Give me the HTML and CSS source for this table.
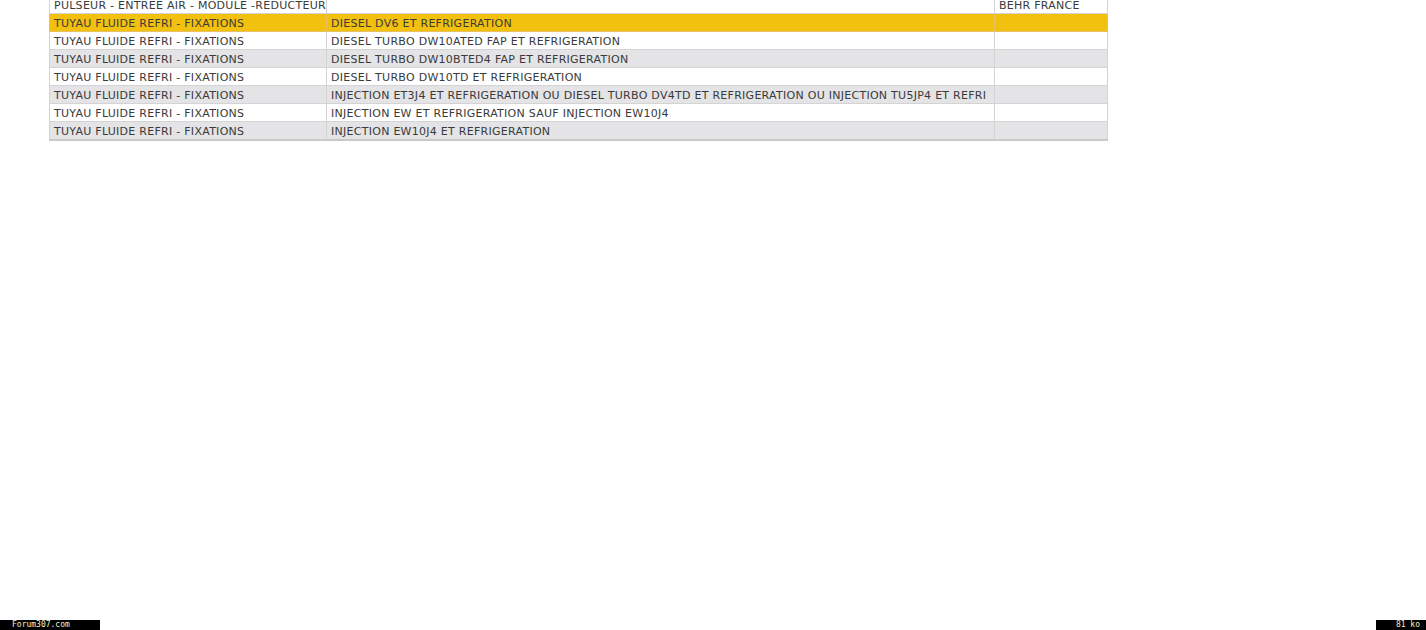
FILE: index.html
```html
<!DOCTYPE html>
<html>
<head>
<meta charset="utf-8">
<link rel="stylesheet" href="styles.css">
</head>
<body>
<div class="page">
  <table class="parts">
    <colgroup><col class="c1"><col class="c2"><col class="c3"></colgroup>
    <tr class="w"><td>PULSEUR - ENTREE AIR - MODULE -REDUCTEUR</td><td></td><td>BEHR FRANCE</td></tr>
    <tr class="y"><td>TUYAU FLUIDE REFRI - FIXATIONS</td><td>DIESEL DV6 ET REFRIGERATION</td><td></td></tr>
    <tr class="w"><td>TUYAU FLUIDE REFRI - FIXATIONS</td><td>DIESEL TURBO DW10ATED FAP ET REFRIGERATION</td><td></td></tr>
    <tr class="g"><td>TUYAU FLUIDE REFRI - FIXATIONS</td><td>DIESEL TURBO DW10BTED4 FAP ET REFRIGERATION</td><td></td></tr>
    <tr class="w"><td>TUYAU FLUIDE REFRI - FIXATIONS</td><td>DIESEL TURBO DW10TD ET REFRIGERATION</td><td></td></tr>
    <tr class="g"><td>TUYAU FLUIDE REFRI - FIXATIONS</td><td>INJECTION ET3J4 ET REFRIGERATION OU DIESEL TURBO DV4TD ET REFRIGERATION OU INJECTION TU5JP4 ET REFRI</td><td></td></tr>
    <tr class="w"><td>TUYAU FLUIDE REFRI - FIXATIONS</td><td>INJECTION EW ET REFRIGERATION SAUF INJECTION EW10J4</td><td></td></tr>
    <tr class="g"><td>TUYAU FLUIDE REFRI - FIXATIONS</td><td>INJECTION EW10J4 ET REFRIGERATION</td><td></td></tr>
  </table>
  <div class="footer">
    <span class="tag">Forum307.com</span>
    <span class="tag size">81 ko</span>
  </div>
</div>
</body>
</html>
```
FILE: styles.css
```css
html, body {
  margin: 0;
  padding: 0;
  background: #ffffff;
  overflow: hidden;
}
.page {
  height: 630px;
  display: flex;
  flex-direction: column;
}
.parts {
  margin-top: -5px;
  margin-left: 49px;
  width: 1058px;
  border-collapse: collapse;
  table-layout: fixed;
  font-family: "DejaVu Sans", Verdana, sans-serif;
  font-size: 11px;
  letter-spacing: 0.27px;
  color: #3a3a3a;
  border-bottom: 2px solid #c9c9c9;
}
.c1 { width: 277px; }
.c2 { width: 668px; }
.c3 { width: 113px; }
.parts td {
  height: 17px;
  padding: 2px 0 0 4px;
  border: 1px solid #d4d4d4;
  white-space: nowrap;
  overflow: hidden;
  line-height: 15px;
  box-sizing: border-box;
}
.parts tr.w td { background: #ffffff; }
.parts tr.g td { background: #e4e4e6; }
.parts tr.y td { background: #f2c00e; border-color: #e6c262; }
.footer {
  margin-top: auto;
  height: 10px;
  display: flex;
  justify-content: space-between;
  align-items: stretch;
}
.tag {
  background: #000;
  color: #f4f0c8;
  font-family: "DejaVu Sans Mono", monospace;
  font-size: 8px;
  line-height: 10px;
  width: 100px;
  padding-left: 12px;
  box-sizing: border-box;
}
.tag.size {
  width: 50px;
  padding-left: 0;
  padding-right: 6px;
  text-align: right;
}
```
